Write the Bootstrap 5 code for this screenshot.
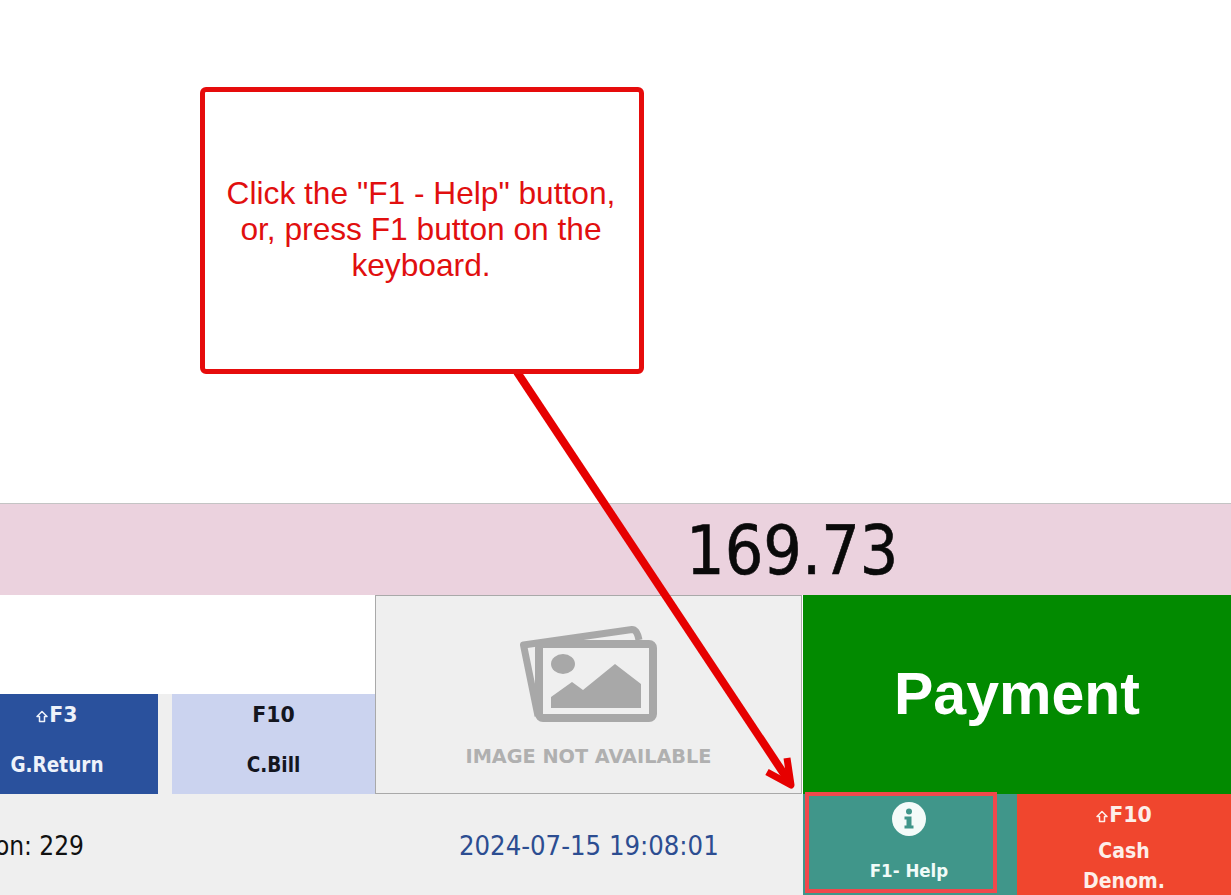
<!DOCTYPE html>
<html lang="en">
<head>
  <meta charset="UTF-8" />
  <title>POS Help Step</title>
  <link href="https://cdn.jsdelivr.net/npm/bootstrap@5.3.3/dist/css/bootstrap.min.css" rel="stylesheet" />
  <style>
    body {
      margin: 0;
      width: 1231px;
      height: 895px;
      overflow: hidden;
      background: #fff;
      font-family: "DejaVu Sans Condensed", "DejaVu Sans", sans-serif;
    }

    .pos-screen { position: relative; width: 1231px; height: 895px; }
    .blank-area { height: 504px; border-bottom: 1px solid #c4c4c4; }

    .total-bar {
      height: 91px;
      background: #ebd2de;
      padding-left: 686px;
      color: #0a0a0a;
      font-size: 67.5px;
      line-height: 94px;
      overflow: hidden;
      -webkit-text-stroke: 0.6px #0a0a0a;
    }

    .action-row { height: 199px; }
    .left-actions { width: 375px; overflow: hidden; }
    .action-keys { height: 100px; background: #efefef; flex-shrink: 0; }

    .key-btn {
      height: 100px;
      padding-top: 7px;
      font-weight: 700;
      text-align: center;
      flex-shrink: 0;
    }
    .key-name { font-family: "DejaVu Sans", sans-serif; font-size: 20.5px; line-height: 28px; }
    .key-shift { vertical-align: -1px; margin-right: 1px; }
    .key-label { font-size: 20.5px; line-height: 26px; margin-top: 23px; }

    .key-return { width: 202px; margin-right: 14px; background: #2a519d; color: #eef2fa; }
    .key-bill { width: 203px; background: #cbd3ef; color: #14161f; }

    .no-image {
      width: 427px;
      margin-right: 1px;
      border: 1px solid #a9a9a9;
      background: #efefef;
      padding-top: 30px;
    }
    .no-image-text {
      margin-top: 25px;
      color: #b0b0b0;
      font-family: "DejaVu Sans", sans-serif;
      font-size: 19.3px;
      font-weight: 700;
      line-height: 20px;
      white-space: nowrap;
    }

    .pay-btn {
      width: 428px;
      background: #028a00;
      color: #fff;
      font-family: "Liberation Sans", Arial, sans-serif;
      font-size: 59px;
      font-weight: 700;
    }

    .status-row { height: 101px; background: #efefef; }
    .session-text { width: 84px; padding-top: 3px; overflow: hidden; color: #111; font-size: 26px; white-space: nowrap; }
    .clock-text { width: 719px; padding: 3px 0 0 375px; color: #2c4d91; font-size: 27.2px; white-space: nowrap; }

    .help-cell { width: 214px; background: #40968a; color: #f1fbf8; position: relative; }
    .help-body { width: 214px; padding-right: 2px; }
    .help-mark {
      position: absolute;
      left: 2px;
      top: -2px;
      width: 192px;
      height: 101px;
      border: 4px solid #f0484c;
    }
    .help-label { font-size: 18.5px; font-weight: 700; line-height: 24px; margin-top: 23px; }

    .denom-cell { width: 214px; background: #f0462e; color: #fdeee9; font-weight: 700; text-align: center; padding-top: 7px; }
    .denom-label { font-size: 21px; line-height: 30px; margin-top: 7px; }

    .callout {
      position: absolute;
      left: 200px;
      top: 87px;
      width: 444px;
      height: 287px;
      padding: 0 2px 4px 0;
      border: 5px solid #e60c0c;
      border-radius: 6px;
      background: #fff;
      color: #e10f0f;
      font-family: "Liberation Sans", Arial, sans-serif;
      font-size: 31.7px;
      line-height: 36px;
      text-align: center;
      white-space: nowrap;
    }
    .arrow-layer { position: absolute; left: 0; top: 0; pointer-events: none; }
  </style>
</head>
<body>
  <div class="pos-screen">
    <div class="blank-area"></div>
    <div class="total-bar">169.73</div>

    <div class="action-row d-flex">
      <div class="left-actions d-flex flex-column align-items-end justify-content-end">
        <div class="action-keys d-flex">
          <div class="key-btn key-return">
            <div class="key-name"><svg class="key-shift" width="12" height="13" viewBox="0 0 12 13" fill="none"><path d="M6 1.500 L11 6.500 H8.500 V11.500 H3.500 V6.500 H1 Z" stroke="currentColor" stroke-width="1.500" stroke-linejoin="round"/></svg>F3</div>
            <div class="key-label">G.Return</div>
          </div>
          <div class="key-btn key-bill">
            <div class="key-name">F10</div>
            <div class="key-label">C.Bill</div>
          </div>
        </div>
      </div>

      <div class="no-image d-flex flex-column align-items-center">
        <svg width="137" height="96" viewBox="0 0 137 96" fill="none">
          <path d="M18 90 L3.500 19 L112 3.500 Q117 3.500 119 14" stroke="#a8a8a8" stroke-width="7" stroke-linejoin="round"/>
          <rect x="19" y="18" width="114" height="74" rx="4" fill="#efefef" stroke="#a8a8a8" stroke-width="8"/>
          <ellipse cx="43" cy="38" rx="12" ry="10" fill="#a8a8a8"/>
          <polygon points="31,82 31,71 52,56 63,64 95,38 121,58 121,82" fill="#a8a8a8"/>
        </svg>
        <div class="no-image-text">IMAGE NOT AVAILABLE</div>
      </div>

      <div class="pay-btn d-flex align-items-center justify-content-center">Payment</div>
    </div>

    <div class="status-row d-flex align-items-stretch">
      <div class="session-text d-flex align-items-center justify-content-end">on: 229</div>
      <div class="clock-text d-flex align-items-center">2024-07-15 19:08:01</div>
      <div class="help-cell d-flex">
        <div class="help-body d-flex flex-column align-items-center pt-2">
          <svg width="34" height="34" viewBox="0 0 34 34">
            <circle cx="17" cy="17" r="17" fill="#f4fbf9"/>
            <circle cx="17" cy="9.500" r="3" fill="#40968a"/>
            <path d="M12.500 14.500h7v9h2v3h-9v-3h2v-6h-2z" fill="#40968a"/>
          </svg>
          <div class="help-label">F1- Help</div>
        </div>
        <div class="help-mark"></div>
      </div>
      <div class="denom-cell">
        <div class="key-name"><svg class="key-shift" width="12" height="13" viewBox="0 0 12 13" fill="none"><path d="M6 1.500 L11 6.500 H8.500 V11.500 H3.500 V6.500 H1 Z" stroke="currentColor" stroke-width="1.500" stroke-linejoin="round"/></svg>F10</div>
        <div class="denom-label">Cash<br>Denom.</div>
      </div>
    </div>

    <svg class="arrow-layer" width="1231" height="895" viewBox="0 0 1231 895" fill="none">
      <path d="M517 372 L790 783" stroke="#e60000" stroke-width="8"/>
      <path d="M767 772 L791 785 L787 758" stroke="#e60000" stroke-width="7" stroke-linejoin="round"/>
    </svg>

    <div class="callout d-flex align-items-center justify-content-center">
      <div>Click the "F1 - Help" button,<br>or, press F1 button on the<br>keyboard.</div>
    </div>
  </div>

  <script src="https://cdn.jsdelivr.net/npm/bootstrap@5.3.3/dist/js/bootstrap.bundle.min.js"></script>
</body>
</html>
